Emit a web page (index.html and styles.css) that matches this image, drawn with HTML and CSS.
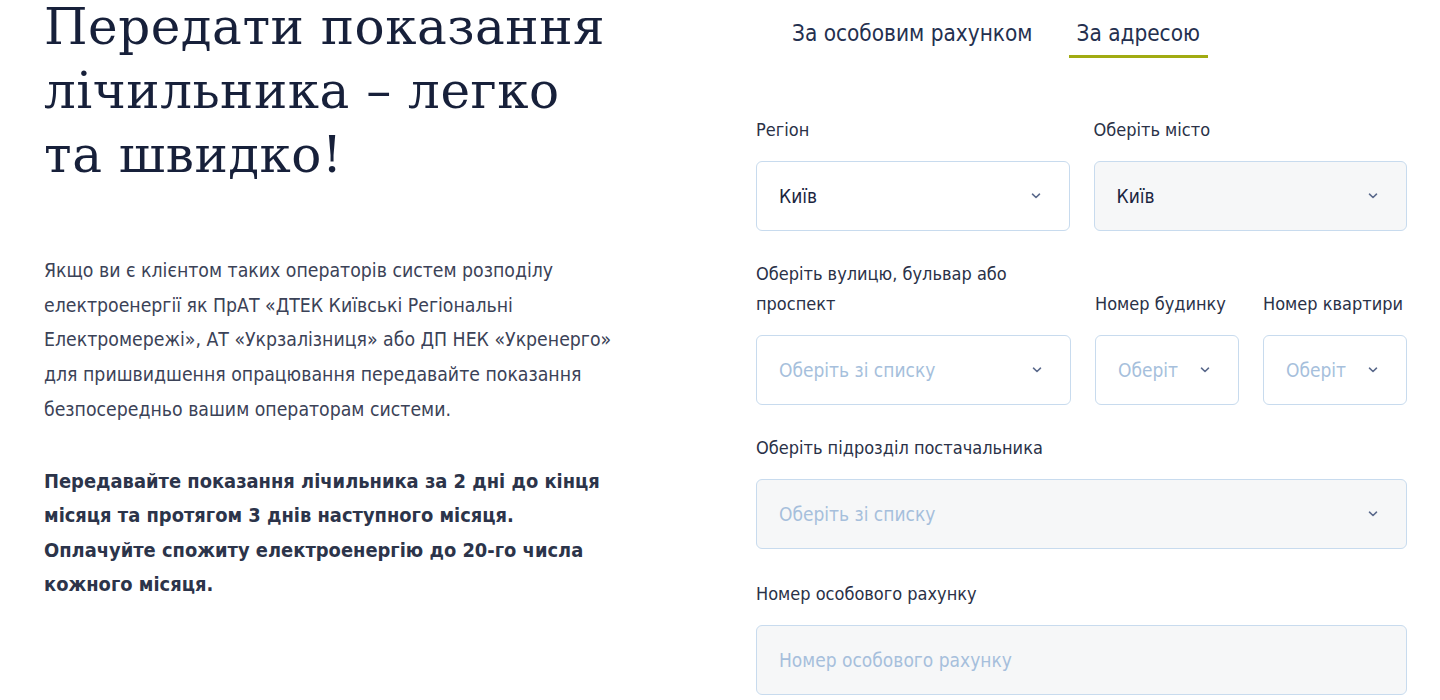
FILE: index.html
```html
<!DOCTYPE html>
<html lang="uk">
<head>
  <meta charset="UTF-8">
  <meta name="viewport" content="width=device-width, initial-scale=1.0">
  <title>Передати показання лічильника</title>
  <link rel="stylesheet" href="styles.css">
</head>
<body>
  <div class="page">
    <div class="intro">
      <h1>Передати показання лічильника – легко та швидко!</h1>
      <p class="intro-text">Якщо ви є клієнтом таких операторів систем розподілу електроенергії як ПрАТ «ДТЕК Київські Регіональні Електромережі», АТ «Укрзалізниця» або ДП НЕК «Укренерго» для пришвидшення опрацювання передавайте показання безпосередньо вашим операторам системи.</p>
      <p class="intro-note">Передавайте показання лічильника за 2 дні до кінця місяця та протягом 3 днів наступного місяця.<br>Оплачуйте спожиту електроенергію до 20-го числа кожного місяця.</p>
    </div>

    <div class="meter-form">
      <div class="tabs">
        <div class="tab">За особовим рахунком</div>
        <div class="tab active">За адресою</div>
      </div>

      <div class="form-row first-row">
        <div class="form-group">
          <label>Регіон</label>
          <div class="select">
            <span class="value">Київ</span>
            <svg class="chevron" viewBox="0 0 10 6"><path d="M1.5 1.2 L5 4.5 L8.5 1.2"/></svg>
          </div>
        </div>
        <div class="form-group">
          <label>Оберіть місто</label>
          <div class="select disabled">
            <span class="value">Київ</span>
            <svg class="chevron" viewBox="0 0 10 6"><path d="M1.5 1.2 L5 4.5 L8.5 1.2"/></svg>
          </div>
        </div>
      </div>

      <div class="form-row address-row">
        <div class="form-group">
          <label>Оберіть вулицю, бульвар або проспект</label>
          <div class="select">
            <span class="placeholder">Оберіть зі списку</span>
            <svg class="chevron" viewBox="0 0 10 6"><path d="M1.5 1.2 L5 4.5 L8.5 1.2"/></svg>
          </div>
        </div>
        <div class="form-group">
          <label>Номер будинку</label>
          <div class="select">
            <span class="placeholder">Оберіть</span>
            <svg class="chevron" viewBox="0 0 10 6"><path d="M1.5 1.2 L5 4.5 L8.5 1.2"/></svg>
          </div>
        </div>
        <div class="form-group">
          <label>Номер квартири</label>
          <div class="select">
            <span class="placeholder">Оберіть</span>
            <svg class="chevron" viewBox="0 0 10 6"><path d="M1.5 1.2 L5 4.5 L8.5 1.2"/></svg>
          </div>
        </div>
      </div>

      <div class="form-group">
        <label>Оберіть підрозділ постачальника</label>
        <div class="select disabled">
          <span class="placeholder">Оберіть зі списку</span>
          <svg class="chevron" viewBox="0 0 10 6"><path d="M1.5 1.2 L5 4.5 L8.5 1.2"/></svg>
        </div>
      </div>

      <div class="form-group last-group">
        <label for="account">Номер особового рахунку</label>
        <input type="text" id="account" class="input" placeholder="Номер особового рахунку">
      </div>
    </div>
  </div>
</body>
</html>
```

FILE: styles.css
```css
body {
  margin: 0;
  background: #fff;
  color: #1b2540;
  font-family: "DejaVu Sans Condensed", "Liberation Sans", sans-serif;
}
.page {
  display: flex;
  gap: 136px;
  padding-left: 44px;
}
.intro {
  width: 576px;
  flex-shrink: 0;
}
h1 {
  font-family: "DejaVu Serif", serif;
  font-weight: normal;
  font-size: 50px;
  line-height: 64px;
  letter-spacing: 0.5px;
  color: #17203a;
  margin: -5px 0 0;
}
.intro-text {
  margin: 67px 0 0;
  font-size: 19.3px;
  line-height: 34.7px;
  color: #3b4257;
}
.intro-note {
  margin: 37px 0 0;
  font-size: 19.9px;
  line-height: 34.5px;
  font-weight: bold;
  color: #2c344a;
}
.meter-form {
  width: 651px;
}
.tabs {
  display: flex;
  gap: 28px;
  margin-left: 28px;
  margin-top: 20px;
}
.tab {
  font-size: 22.4px;
  padding: 0 8px 9px;
  color: #24304f;
  border-bottom: 3px solid transparent;
}
.tab.active {
  border-bottom-color: #a1ab12;
}
.form-row {
  display: flex;
  gap: 24px;
}
.form-row .form-group {
  flex: 1;
  min-width: 0;
  display: flex;
  flex-direction: column;
  justify-content: flex-end;
}
.address-row .form-group {
  flex: 0 0 144px;
}
.address-row .form-group:first-child {
  flex: 1;
}
.form-group {
  margin-top: 28px;
}
.first-row .form-group {
  margin-top: 57px;
}
.last-group {
  margin-top: 30px;
}
label {
  display: block;
  font-size: 18px;
  line-height: 30px;
  color: #2a3147;
  margin-bottom: 16px;
}
.address-row .form-group + .form-group label {
  white-space: nowrap;
}
.select, .input {
  height: 70px;
  box-sizing: border-box;
  border: 1px solid #c8dbee;
  border-radius: 6px;
  background: #fff;
  display: flex;
  align-items: center;
  padding: 0 28px 0 22px;
  font-size: 19px;
  font-family: inherit;
}
.select .value, .select .placeholder {
  flex: 1;
  overflow: hidden;
  white-space: nowrap;
}
.select .value {
  color: #1b2540;
}
.placeholder, .input::placeholder {
  color: #a6bfdc;
}
.select.disabled, .input {
  background: #f6f7f8;
}
.input {
  width: 100%;
  outline: none;
}
.chevron {
  width: 10px;
  height: 6px;
  flex-shrink: 0;
  margin-left: 22px;
  fill: none;
  stroke: #5b6a8c;
  stroke-width: 1.6;
  stroke-linecap: round;
  stroke-linejoin: round;
}
```
